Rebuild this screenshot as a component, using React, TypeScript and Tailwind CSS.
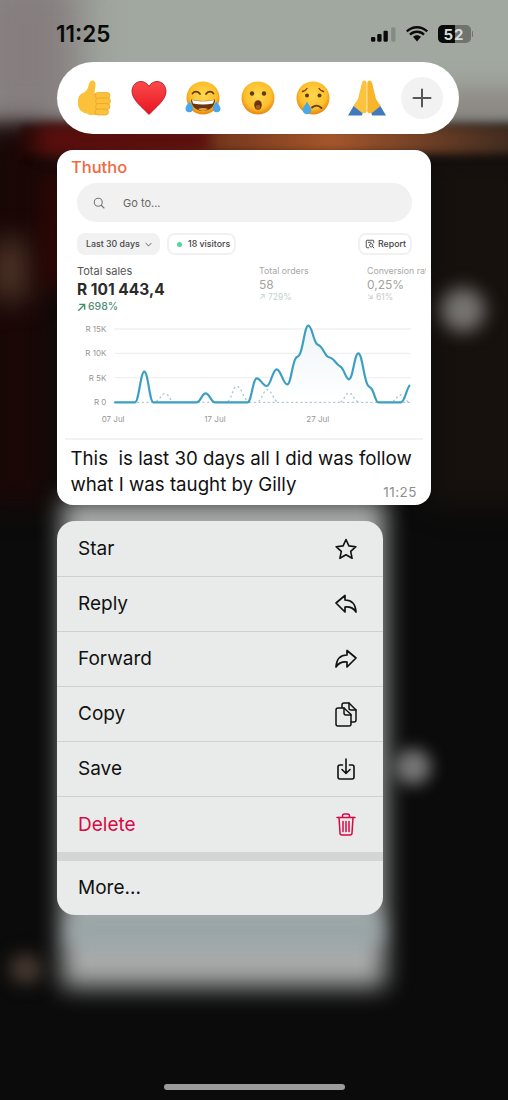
import React from 'react'

const sans = 'font-["Inter",sans-serif]'

// monotone cubic through the points, same idea as d3 curveMonotoneX
function smooth(pts: number[][]) {
  const n = pts.length
  const slope = (i: number) => (pts[i + 1][1] - pts[i][1]) / (pts[i + 1][0] - pts[i][0])
  const tan = pts.map((_, i) => {
    if (i === 0) return slope(0) * 0.5
    if (i === n - 1) return slope(n - 2) * 0.5
    const a = slope(i - 1)
    const b = slope(i)
    return a * b <= 0 ? 0 : (2 * a * b) / (a + b)
  })
  let d = `M${pts[0][0]} ${pts[0][1]}`
  for (let i = 1; i < n; i++) {
    const [x0, y0] = pts[i - 1]
    const [x1, y1] = pts[i]
    const h = (x1 - x0) / 2.4
    d += ` C${x0 + h} ${y0 + tan[i - 1] * h} ${x1 - h} ${y1 - tan[i] * h} ${x1} ${y1}`
  }
  return d
}

const sales = [
  [178, 262], [240, 262], [268, 170], [295, 262], [425, 262], [452, 235], [480, 262], [578, 262],
  [605, 190], [635, 213], [665, 163], [697, 208], [722, 130], [733, 120], [760, 32], [785, 86],
  [797, 95], [818, 125], [830, 130], [850, 150], [860, 158], [882, 193], [910, 115], [938, 210],
  [950, 222], [970, 262], [1038, 262], [1065, 210],
]

const previous = [
  [[305, 258], [330, 236], [355, 260]],
  [[520, 258], [545, 214], [578, 258]],
  [[612, 258], [636, 224], [668, 262]],
  [[858, 260], [882, 234], [908, 260]],
  [[1015, 258], [1036, 240], [1062, 262]],
]

function Chart() {
  const line = smooth(sales)
  return (
    <svg viewBox="6 15 1122 345" className="block w-[374px] h-[115px]">
      <defs>
        <linearGradient id="area" x1="0" y1="0" x2="0" y2="1">
          <stop offset="0" stopColor="#eef5f8" />
          <stop offset="1" stopColor="#ffffff" />
        </linearGradient>
      </defs>
      {[42, 115, 188].map((y) => (
        <line key={y} x1="178" x2="1068" y1={y} y2={y} stroke="#f0f0f0" strokeWidth="4" />
      ))}
      <path d={`${line} L1065 262 L178 262 Z`} fill="url(#area)" />
      <line x1="178" x2="1068" y1="262" y2="262" stroke="#a9c6d0" strokeWidth="4" strokeDasharray="3 11" strokeLinecap="round" />
      {previous.map((p, i) => (
        <path key={i} d={smooth(p)} fill="none" stroke="#a9c6d0" strokeWidth="4" strokeDasharray="3 11" strokeLinecap="round" />
      ))}
      <path d={line} fill="none" stroke="#3c9fc2" strokeWidth="6.500" strokeLinejoin="round" />
      <g fontSize="24" fill="#969696" textAnchor="end" fontFamily="Inter, sans-serif">
        <text x="154" y="51">R 15K</text>
        <text x="154" y="124">R 10K</text>
        <text x="154" y="197">R 5K</text>
        <text x="154" y="270">R 0</text>
      </g>
      <g fontSize="24" fill="#969696" fontFamily="Inter, sans-serif">
        <text x="140" y="320">07 Jul</text>
        <text x="448" y="320">17 Jul</text>
        <text x="754" y="320">27 Jul</text>
      </g>
    </svg>
  )
}

function Thumb() {
  return (
    <svg viewBox="0 0 36 36" className="w-9 h-9">
      <path d="M2 20c0-3 2-6 5-7 3-1.500 5-4 5.500-7.500C13 2.500 14.500.5 16.500.5c2.500 0 3.500 2.500 3 5.500L18.500 13H24v22h-8c-2 0-3.500-.5-5-1.500C6 33 2 29 2 24z" fill="#fbc13b" />
      <g fill="#fbc13b" stroke="#e8a322" strokeWidth="0.700">
        <rect x="19" y="12.500" width="15" height="6" rx="3" />
        <rect x="19.500" y="18" width="15" height="6" rx="3" />
        <rect x="19.500" y="23.500" width="14.500" height="6" rx="3" />
        <rect x="19" y="29" width="13.500" height="6" rx="3" />
      </g>
    </svg>
  )
}

function Heart() {
  return (
    <svg viewBox="0 0 36 36" className="w-9 h-9">
      <defs>
        <linearGradient id="heart" x1="0" y1="0" x2="0" y2="1">
          <stop offset="0" stopColor="#fb4a4a" />
          <stop offset="1" stopColor="#e8151f" />
        </linearGradient>
      </defs>
      <path d="M18 34.500C12 28 1 20 1 11.500 1 5.500 5 1.500 10 1.500c3.500 0 6.500 2 8 5 1.500-3 4.500-5 8-5 5 0 9 4 9 10 0 8.500-11 16.500-17 23z" fill="url(#heart)" stroke="#a80e18" strokeWidth="0.800" />
    </svg>
  )
}

function FaceBase({ id }: { id: string }) {
  return (
    <>
      <defs>
        <radialGradient id={id} cx="0.5" cy="0.42" r="0.56">
          <stop offset="0" stopColor="#ffd84f" />
          <stop offset="0.72" stopColor="#fdbf2c" />
          <stop offset="1" stopColor="#ea8a10" />
        </radialGradient>
      </defs>
      <circle cx="18" cy="18" r="16.500" fill={`url(#${id})`} />
    </>
  )
}

function Laugh() {
  return (
    <svg viewBox="0 0 36 36" className="w-9 h-9">
      <FaceBase id="f1" />
      <path d="M7.500 13.500c2-2.500 5.500-2.500 7.500.5M21 14c2-3 5.500-3 7.500-.5" fill="none" stroke="#5d3a10" strokeWidth="1.700" strokeLinecap="round" />
      <path d="M6 19.500c8 2 16 2 24 0 0 6.500-5 11.500-12 11.500S6 26 6 19.500z" fill="#6b3410" />
      <path d="M7 20c7 1.800 15 1.800 22 0l-1 3.500c-6.500 1.300-13.500 1.300-20 0z" fill="#ffffff" />
      <path d="M23 29c-3-1.500-7-1.500-10 0 3 2.500 7 2.500 10 0z" fill="#e8a23a" />
      <path d="M4.500 21.500C3 24 .5 26 .5 28.500a3.800 3.800 0 0 0 7.600 0c0-2.500-2-4.800-3.600-7zM31.500 21.500c-1.600 2.200-3.600 4.500-3.600 7a3.800 3.800 0 0 0 7.600 0c0-2.500-2.500-4.500-4-7z" fill="#4aa8e8" />
    </svg>
  )
}

function Wow() {
  return (
    <svg viewBox="0 0 36 36" className="w-9 h-9">
      <FaceBase id="f2" />
      <circle cx="12" cy="13.500" r="2.200" fill="#5d3a10" />
      <circle cx="24" cy="13.500" r="2.200" fill="#5d3a10" />
      <ellipse cx="18" cy="25" rx="3.800" ry="4.800" fill="#6b3410" />
      <ellipse cx="18" cy="27" rx="2.400" ry="2" fill="#a85a1c" />
    </svg>
  )
}

function Cry() {
  return (
    <svg viewBox="0 0 36 36" className="w-9 h-9">
      <FaceBase id="f3" />
      <path d="M7.500 11.500c2-.5 3.500-1.500 4.500-3M28.500 11.500c-2-.5-3.500-1.500-4.500-3" fill="none" stroke="#5d3a10" strokeWidth="1.300" strokeLinecap="round" />
      <circle cx="12" cy="15.500" r="2" fill="#5d3a10" />
      <circle cx="24.500" cy="15.500" r="2" fill="#5d3a10" />
      <path d="M17 27.500c3-2.500 6.500-2.500 9.500.5" fill="none" stroke="#5d3a10" strokeWidth="1.800" strokeLinecap="round" />
      <path d="M12 21.500c-1.200 3-4.300 5.500-4.300 8.500a4.300 4.300 0 0 0 8.600 0c0-3-3.100-5.500-4.300-8.500z" fill="#4aa8e8" />
    </svg>
  )
}

function Pray() {
  return (
    <svg viewBox="0 0 38 36" className="w-[38px] h-9">
      <path d="M0 35.500l6.500-11 8.500 6.500-1 4.500zM38 35.500l-6.500-11-8.500 6.500 1 4.500z" fill="#4079bd" />
      <path d="M18.700 31.500V4c0-2-.8-3.500-2.200-3.500S14 2 13.500 4.500L10 19l-4.500 7 8 6.500 3.500 1z" fill="#fbc33e" />
      <path d="M19.300 31.500V4c0-2 .8-3.500 2.200-3.500S24 2 24.500 4.500L28 19l4.500 7-8 6.500-3.500 1z" fill="#f7b52c" />
    </svg>
  )
}

function StatusIcons() {
  return (
    <div className="flex items-center gap-[10px] mr-[35px]">
      <svg viewBox="0 0 26 15" className="w-[25px] h-[15px]" fill="#0a0a0a">
        <rect x="0" y="10" width="4.500" height="5" rx="1.200" />
        <rect x="6.500" y="7" width="4.500" height="8" rx="1.200" />
        <rect x="13" y="3.500" width="4.500" height="11.500" rx="1.200" />
        <rect x="21" y="0" width="4.500" height="15" rx="1.200" fill="#6f746f" opacity="0.55" />
      </svg>
      <svg viewBox="0 0 22 16" className="w-[22px] h-4" fill="#0a0a0a">
        <path d="M11 2.500c-3.700 0-7 1.400-9.500 3.800L0 4.600C3 1.800 6.800 0 11 0s8 1.800 11 4.600l-1.500 1.700C18 3.900 14.700 2.500 11 2.500z" />
        <path d="M11 7c-2.400 0-4.500.9-6.200 2.400L3.200 7.700C5.300 5.800 8 4.600 11 4.600s5.700 1.200 7.800 3.100l-1.600 1.700C15.500 7.900 13.400 7 11 7z" />
        <path d="M11 9.200c1.500 0 2.900.6 4 1.600L11 15.500l-4-4.700c1.100-1 2.500-1.600 4-1.600z" />
      </svg>
      <div className="flex items-center">
        <div className="relative w-[33px] h-[18px] rounded-[5px] bg-[#6f746f] overflow-hidden flex items-center justify-center">
          <div className="absolute left-0 top-0 bottom-0 w-[17px] bg-[#0a0a0a]" />
          <span className="relative text-[15px] leading-none font-bold tracking-[1px] text-[#d8dbd8]">52</span>
        </div>
        <div className="w-[1.500px] h-[6px] ml-[1px] rounded-r bg-[#6f746f]" />
      </div>
    </div>
  )
}

function Star() {
  return (
    <svg viewBox="0 0 24 24" className="w-[24px] h-[24px]" fill="none" stroke="#111" strokeWidth="1.600" strokeLinejoin="round">
      <path d="M12 2.500l2.900 6.400 7 .8-5.200 4.700 1.400 6.900-6.100-3.500-6.100 3.500 1.400-6.900-5.200-4.700 7-.8z" />
    </svg>
  )
}

function ReplyIcon() {
  return (
    <svg viewBox="0 0 24 20" className="w-[24px] h-[20px]" fill="none" stroke="#111" strokeWidth="1.700" strokeLinejoin="round" strokeLinecap="round">
      <path d="M2 9l9-7.500v4.500c6.500 0 10.500 4 11 12-2.500-4-6-5.500-11-5v5z" />
    </svg>
  )
}

function ForwardIcon() {
  return (
    <svg viewBox="0 0 24 20" className="w-[24px] h-[20px]" fill="none" stroke="#111" strokeWidth="1.700" strokeLinejoin="round" strokeLinecap="round">
      <path d="M22 9l-9-7.500v4.500c-6.500 0-10.500 4-11 12 2.500-4 6-5.500 11-5v5z" />
    </svg>
  )
}

function CopyIcon() {
  return (
    <svg viewBox="0 0 22 25" className="w-[22px] h-[25px]" fill="none" stroke="#111" strokeWidth="1.500" strokeLinejoin="round" strokeLinecap="round">
      <path d="M7 5.500V3a2 2 0 0 1 2-2h5l7 7v10a2 2 0 0 1-2 2h-3" />
      <path d="M14 1v5a2 2 0 0 0 2 2h5" />
      <path d="M3 6h6l7 6.500V22a2 2 0 0 1-2 2H3a2 2 0 0 1-2-2V8a2 2 0 0 1 2-2z" />
      <path d="M9 6v5a2 2 0 0 0 2 2h5" />
    </svg>
  )
}

function SaveIcon() {
  return (
    <svg viewBox="0 0 18 22" className="w-[18px] h-[22px]" fill="none" stroke="#111" strokeWidth="1.600" strokeLinejoin="round" strokeLinecap="round">
      <path d="M5.500 7H3a2 2 0 0 0-2 2v10a2 2 0 0 0 2 2h12a2 2 0 0 0 2-2V9a2 2 0 0 0-2-2h-2.500" />
      <path d="M9 1v14M5 11.500L9 15.500l4-4" />
    </svg>
  )
}

function TrashIcon() {
  return (
    <svg viewBox="0 0 20 23" className="w-[20px] h-[23px]" fill="none" stroke="#d60a45" strokeWidth="1.500" strokeLinejoin="round" strokeLinecap="round">
      <path d="M1 4.500h18M6.500 4.500V3a2 2 0 0 1 2-2h3a2 2 0 0 1 2 2v1.500" />
      <path d="M3 4.500l1 15.500a2 2 0 0 0 2 2h8a2 2 0 0 0 2-2l1-15.500" />
      <path d="M7 8.500v10M10 8.500v10M13 8.500v10" />
    </svg>
  )
}

const menu = [
  { label: 'Star', icon: <Star /> },
  { label: 'Reply', icon: <ReplyIcon /> },
  { label: 'Forward', icon: <ForwardIcon /> },
  { label: 'Copy', icon: <CopyIcon /> },
  { label: 'Save', icon: <SaveIcon /> },
]

// the blurred chat behind the menu
function Backdrop() {
  return (
    <div className="absolute inset-0 overflow-hidden">
      <div className="absolute left-[-40px] right-[-40px] top-[-40px] h-[160px] bg-[#a1a89f] blur-[8px]" />
      <div className="absolute left-[-30px] top-[-30px] w-[110px] h-[160px] bg-[#857d7e] blur-[20px]" />
      <div className="absolute left-[410px] top-[90px] w-[140px] h-[30px] bg-[#8b8580] blur-[12px]" />
      <div className="absolute left-[-20px] top-[126px] w-[70px] h-[380px] bg-[#1a0706] blur-[14px]" />
      <div className="absolute left-[-10px] top-[240px] w-[40px] h-[60px] bg-[#4a3226] blur-[14px]" />
      <div className="absolute left-[40px] top-[170px] w-[30px] h-[120px] bg-[#2c0705] blur-[10px]" />
      <div className="absolute left-[431px] top-[155px] w-[100px] h-[350px] bg-[#17110d] blur-[14px]" />
      <div className="absolute left-[20px] right-[-30px] top-[126px] h-[28px] blur-[5px] bg-linear-to-r from-[#2a0806] via-[#a5562a] via-60% to-[#33251c]" />
      <div className="absolute left-[40px] top-[126px] w-[170px] h-[28px] blur-[8px] bg-[#5a0e0d]" />
      <div className="absolute left-[441px] top-[288px] w-[44px] h-[44px] rounded-full bg-[#777573] blur-[9px]" />
      <div className="absolute left-[395px] top-[749px] w-[36px] h-[36px] rounded-full bg-[#777777] blur-[8px]" />
      <div className="absolute left-[62px] top-[500px] w-[323px] h-[487px] bg-[#a8abaa] blur-[12px]" />
      <div className="absolute left-[70px] top-[915px] w-[310px] h-[30px] bg-[#98a5a8] blur-[10px]" />
      <div className="absolute left-[10px] top-[955px] w-[32px] h-[28px] rounded-full bg-[#4c3e34] blur-[9px]" />
    </div>
  )
}

export default function App() {
  return (
    <div className={`relative w-[508px] h-[1100px] overflow-hidden bg-[#0b0b0b] ${sans}`}>
      <Backdrop />
      <div className="relative flex flex-col h-full">
        <div className="h-[62px] pl-[56px] pt-[20px] flex items-start justify-between">
          <span className="text-[22.500px] leading-[28px] font-semibold text-[#0a0a0a]">11:25</span>
          <div className="h-[28px] flex items-center"><StatusIcons /></div>
        </div>

        <div className="ml-[57px] w-[402px] h-[72px] rounded-full bg-white grid grid-cols-[repeat(7,54.6px)] justify-items-center items-center pl-[10px]">
          <Thumb />
          <Heart />
          <Laugh />
          <Wow />
          <Cry />
          <Pray />
          <div className="w-[42px] h-[42px] rounded-full bg-[#f2f2f2] flex items-center justify-center">
            <svg viewBox="0 0 20 20" className="w-5 h-5" stroke="#555" strokeWidth="2" strokeLinecap="round">
              <path d="M10 1.500v17M1.500 10h17" />
            </svg>
          </div>
        </div>

        <div className="ml-[57px] mt-4 w-[374px] h-[355px] rounded-[16px] bg-white overflow-hidden">
          <div className="pl-[14px] pt-[7px] text-[16.500px] leading-[20px] font-medium text-[#ef6a3f]">Thutho</div>
          <div className="ml-[20px] mr-[19px] mt-[6px] h-[39px] rounded-full bg-[#f1f1f1] flex items-center pl-[16px]">
            <svg viewBox="0 0 24 24" className="w-[12px] h-[12px]" fill="none" stroke="#777" strokeWidth="2.200" strokeLinecap="round">
              <circle cx="10.500" cy="10.500" r="8" />
              <path d="M16.500 16.500L22 22" />
            </svg>
            <span className="ml-[18px] mt-[1px] text-[11px] text-[#666]">Go to...</span>
          </div>
          <div className="ml-[20px] mr-[19px] mt-[11px] flex items-center">
            <div className="h-[22px] w-[83px] pl-[9px] rounded-[8px] bg-[#f1f1f1] flex items-center gap-[5px] text-[8.800px] font-medium text-[#444]">
              Last 30 days
              <svg viewBox="0 0 10 6" className="w-[7px] h-[5px]" fill="none" stroke="#444" strokeWidth="1.200"><path d="M1 1l4 4 4-4" /></svg>
            </div>
            <div className="ml-[7px] h-[22px] w-[69px] pl-[8px] rounded-[8px] border-2 border-[#f1f1f1] flex items-center gap-[6px] text-[8.800px] font-medium text-[#444]">
              <span className="w-[5px] h-[5px] rounded-full bg-[#4fd89a]" />
              18 visitors
            </div>
            <div className="ml-auto h-[22px] w-[54px] pl-[5px] rounded-[8px] border-2 border-[#f1f1f1] flex items-center gap-[3px] text-[8.800px] font-medium text-[#444]">
              <svg viewBox="0 0 12 12" className="w-[10px] h-[10px]" fill="none" stroke="#444" strokeWidth="1.100">
                <path d="M5 10.500H2.500a1 1 0 0 1-1-1v-7a1 1 0 0 1 1-1h7a1 1 0 0 1 1 1V5" />
                <circle cx="7.500" cy="7.500" r="2" />
                <path d="M9 9l2 2M3.500 4h4" />
              </svg>
              Report
            </div>
          </div>
          <div className="ml-[20px] mr-[5px] mt-[9px] h-[50px] flex items-start whitespace-nowrap overflow-hidden">
            <div className="w-[182px] shrink-0">
              <div className="text-[11px] leading-[15px] text-[#555]">Total sales</div>
              <div className="text-[15.500px] leading-[21px] font-bold text-[#2b2b2b]">R 101 443,4</div>
              <div className="flex items-center gap-[2px] text-[10.500px] leading-[14px] font-medium text-[#4f8f72]">
                <svg viewBox="0 0 10 10" className="w-[9px] h-[9px]" fill="none" stroke="#3f8f6c" strokeWidth="1.500"><path d="M1.500 8.500L8 2M2.500 1.500H8.500V7.500" /></svg>
                698%
              </div>
            </div>
            <div className="w-[108px] shrink-0">
              <div className="text-[8.800px] leading-[13px] text-[#a8a8a8]">Total orders</div>
              <div className="text-[12px] leading-[15px] text-[#a2a2a2]">58</div>
              <div className="text-[8.500px] leading-[11px] text-[#bfd3c9]">↗ 729%</div>
            </div>
            <div className="shrink-0">
              <div className="text-[8.800px] leading-[13px] text-[#a8a8a8]">Conversion rate</div>
              <div className="text-[12px] leading-[15px] text-[#a2a2a2]">0,25%</div>
              <div className="text-[8.500px] leading-[11px] text-[#c9c9c9]">↘ 61%</div>
            </div>
          </div>
          <div className="mt-[6px]"><Chart /></div>
          <div className="mx-[8px] mt-[3px] h-[2px] bg-[#f2f2f2]" />
          <div className="pl-[13.500px] pr-[14px] pt-[6px] text-[18.700px] leading-[26px] text-[#111] whitespace-pre">
            <div>This  is last 30 days all I did was follow</div>
            <div className="flex items-end justify-between">
              <span>what I was taught by Gilly</span>
              <span className="text-[13.500px] leading-[18px] tracking-[0.5px] text-[#8e8e8e] translate-y-[3px]">11:25</span>
            </div>
          </div>
        </div>

        <div className="ml-[57px] mt-4 w-[326px] pt-[1px] rounded-[18px] bg-[#e9ebeb] overflow-hidden text-[19px] text-[#111]">
          {menu.map((m) => (
            <div key={m.label} className="h-[55px] flex items-center justify-between pl-[21px] pr-[25px] border-b border-[#cfd1d1]">
              <span className="mt-[1px]">{m.label}</span>
              <div className="w-[24px] flex justify-center">{m.icon}</div>
            </div>
          ))}
          <div className="h-[55px] flex items-center justify-between pl-[21px] pr-[25px] text-[#d60a45]">
            <span className="mt-[2px]">Delete</span>
            <div className="w-[24px] flex justify-center"><TrashIcon /></div>
          </div>
          <div className="h-[9px] bg-[#d3d4d3]" />
          <div className="h-[54px] flex items-center pl-[21px]"><span className="mt-[1px]">More...</span></div>
        </div>

        <div className="mt-auto mb-[10px] mx-auto w-[181px] h-[6px] rounded-full bg-[#9c9c9c]" />
      </div>
    </div>
  )
}
